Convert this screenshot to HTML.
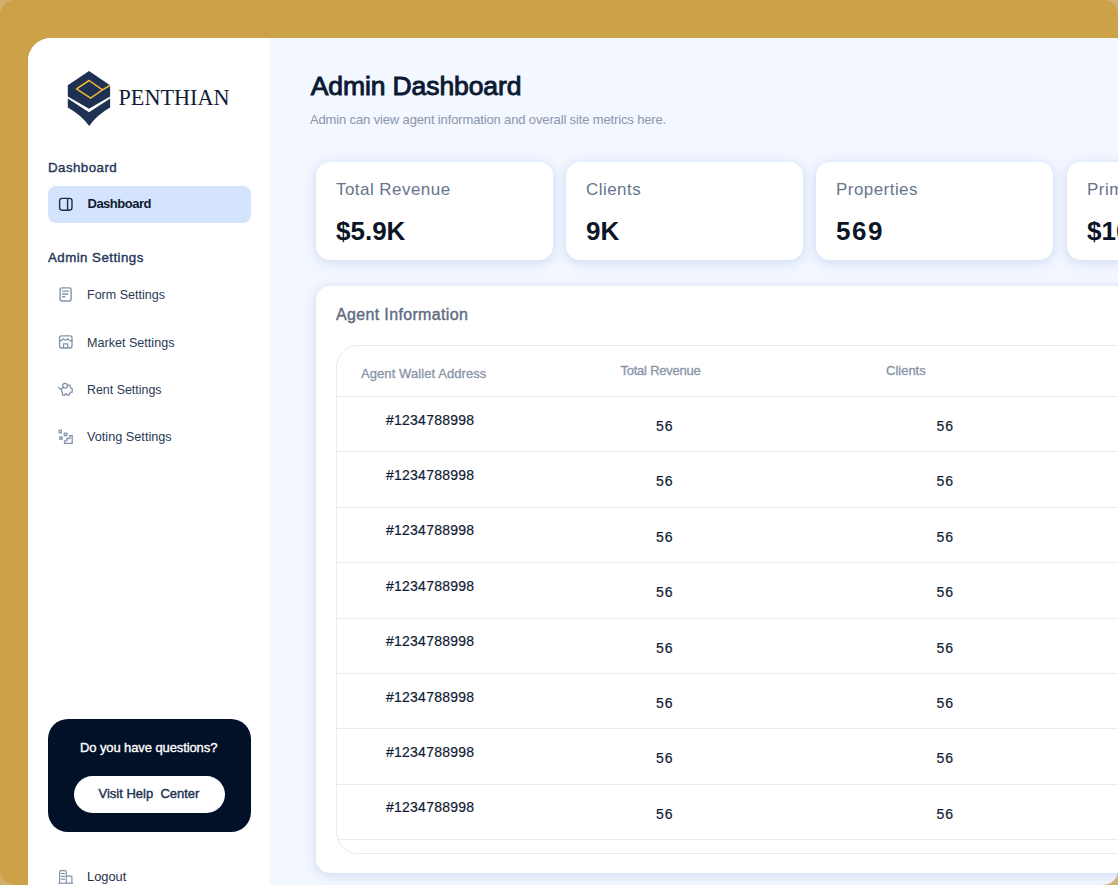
<!DOCTYPE html>
<html><head><meta charset="utf-8">
<style>
*{box-sizing:border-box;margin:0;padding:0}
html,body{width:1118px;height:885px;overflow:hidden;background:#D3AF6D}
body{font-family:"Liberation Sans",sans-serif;position:relative}
.frame{position:absolute;left:0;top:0;width:1118px;height:885px;border-radius:15px;background:#CDA147;overflow:hidden}
.app{position:absolute;left:28px;top:38px;width:1200px;height:900px;border-top-left-radius:23px;background:#F3F7FF;overflow:hidden}
.side{position:absolute;left:28px;top:38px;width:242px;height:900px;border-top-left-radius:23px;background:#fff}
.t{position:absolute;white-space:nowrap;line-height:1}
.card{position:absolute;top:162px;width:237px;height:98px;background:#fff;border-radius:14px;box-shadow:0 2px 10px 2px rgba(190,208,238,.55)}
.lbl{position:absolute;left:20px;top:18.5px;font-size:17px;letter-spacing:0.45px;color:#66758C;line-height:1;white-space:nowrap}
.val{position:absolute;left:20px;top:56px;font-size:26px;font-weight:bold;color:#0B1526;line-height:1;white-space:nowrap}
.agent{position:absolute;left:316px;top:286px;width:900px;height:587px;background:#fff;border-radius:14px;box-shadow:0 2px 10px 2px rgba(190,208,238,.55)}
.tbl{position:absolute;left:336px;top:345px;width:900px;height:509px;border:1px solid #E6EAF1;border-radius:22px;background:#fff}
.sep{position:absolute;left:337px;width:800px;height:1px;background:#E8ECF2}
.addr{position:absolute;left:386px;font-size:14px;letter-spacing:0.24px;-webkit-text-stroke:0.2px #0F1B33;color:#0F1B33;line-height:1;white-space:nowrap}
.n1{position:absolute;left:656px;font-size:14px;letter-spacing:1px;-webkit-text-stroke:0.2px #0F1B33;color:#0F1B33;line-height:1}
.n2{position:absolute;left:936.5px;font-size:14px;letter-spacing:1px;-webkit-text-stroke:0.2px #0F1B33;color:#0F1B33;line-height:1}
.corner{position:absolute;width:24px;height:24px}
</style></head>
<body>
<div class="frame">
  <div class="app"></div>
  <div class="side"></div>
</div>

<!-- logo -->
<svg style="position:absolute;left:60px;top:66px" width="60" height="64" viewBox="60 66 60 64">
  <path d="M89 71 L110.1 85.2 L110.1 96.4 L89 108.7 L67.8 96.4 L67.8 85.2 Z" fill="#1E3152"/>
  <path d="M67.8 98.5 L89 112.3 L110.1 98.5 L110.1 107.6 Q97 115 89.2 126 Q81 115 67.8 107.6 Z" fill="#1E3152"/>
  <path d="M89.1 80.5 L102.5 89.9 L90.6 98.2 L76.5 88.8 Z M102.5 89.9 L109.8 85.5" fill="none" stroke="#F2B739" stroke-width="1.5" stroke-linejoin="round"/>
</svg>
<div class="t" style="left:118.5px;top:86.5px;font-family:'Liberation Serif',serif;font-size:22.2px;color:#0F1D38">PENTHIAN</div>

<!-- sidebar -->
<div class="t" style="left:48px;top:161px;font-size:13.3px;letter-spacing:0.45px;-webkit-text-stroke:0.4px #25385A;color:#25385A">Dashboard</div>
<div style="position:absolute;left:48px;top:186px;width:203px;height:37px;border-radius:8px;background:#D5E4FD"></div>
<div class="t" style="left:87.5px;top:197px;font-size:13px;font-weight:bold;letter-spacing:-0.5px;color:#0E1A30">Dashboard</div>
<div class="t" style="left:48px;top:251px;font-size:13.3px;letter-spacing:0.45px;-webkit-text-stroke:0.4px #25385A;color:#25385A">Admin Settings</div>
<div class="t" style="left:86.5px;top:288.2px;font-size:13.6px;transform:scaleX(0.921);transform-origin:0 0;color:#2B3A55">Form Settings</div>
<div class="t" style="left:86.5px;top:335.6px;font-size:13.6px;transform:scaleX(0.926);transform-origin:0 0;color:#2B3A55">Market Settings</div>
<div class="t" style="left:86.5px;top:383px;font-size:13.6px;transform:scaleX(0.913);transform-origin:0 0;color:#2B3A55">Rent Settings</div>
<div class="t" style="left:86.8px;top:430px;font-size:13.6px;transform:scaleX(0.934);transform-origin:0 0;color:#2B3A55">Voting Settings</div>

<div style="position:absolute;left:48px;top:719px;width:203px;height:113px;border-radius:20px;background:#031128"></div>
<div class="t" style="left:80px;top:740.5px;font-size:13px;letter-spacing:-0.1px;-webkit-text-stroke:0.35px #fff;color:#fff">Do you have questions?</div>
<div style="position:absolute;left:74px;top:775.5px;width:150.5px;height:37px;border-radius:19px;background:#fff"></div>
<div class="t" style="left:98.5px;top:787px;font-size:13px;-webkit-text-stroke:0.4px #213352;color:#213352">Visit Help&nbsp; Center</div>
<div class="t" style="left:86.5px;top:870.3px;font-size:13.6px;transform:scaleX(0.946);transform-origin:0 0;color:#1F2E4A">Logout</div>


<!-- icons -->
<svg style="position:absolute;left:54px;top:192px" width="24" height="24" viewBox="54 192 24 24" fill="none" stroke="#1D2F4E" stroke-width="1.4">
  <rect x="59.6" y="198.4" width="12.4" height="11.8" rx="2.6"/><path d="M67.6 198.4 V210.2"/>
</svg>
<svg style="position:absolute;left:54px;top:283px" width="24" height="24" viewBox="54 283 24 24" fill="none" stroke="#8392AA" stroke-width="1.4" stroke-linecap="round">
  <rect x="60.1" y="287.9" width="11" height="13.1" rx="2"/><path d="M62.6 291.1 H68.6 M62.6 294 H67.6 M62.6 296.7 H64.6"/>
</svg>
<svg style="position:absolute;left:54px;top:330px" width="24" height="24" viewBox="54 330 24 24" fill="none" stroke="#8392AA" stroke-width="1.3" stroke-linejoin="round">
  <rect x="59.6" y="335.8" width="12.4" height="12.2" rx="2"/>
  <path d="M59.6 340.6 Q61.6 341.4 63.4 338.6 Q65.5 341.6 67.6 338.6 Q69.5 341.4 72 340.6"/>
  <path d="M63.5 348 V343.8 H67.7 V348"/>
</svg>
<svg style="position:absolute;left:54px;top:377px" width="24" height="24" viewBox="54 377 24 24" fill="none" stroke="#8392AA" stroke-width="1.3" stroke-linejoin="round" stroke-linecap="round">
  <circle cx="65.1" cy="385.8" r="2.4"/>
  <path d="M62.9 387.3 C61.6 388.2 61.3 389.6 61.6 391 L62.5 392.8 L62.5 395.2 L64.7 395.2 L65.2 393.8 L66.6 393.8 L67 395.2 L69.2 395.2 L69.4 393.3 L71.1 392.2 L72.2 392.2 L72.2 388.6 L71 388.4 L70.2 386.8 L70.2 385.2 L67.4 385.2"/>
  <path d="M58.8 387.4 L60.4 389.2"/>
</svg>
<svg style="position:absolute;left:54px;top:425px" width="24" height="24" viewBox="54 425 24 24" fill="none" stroke="#8392AA" stroke-width="1.3" stroke-linejoin="round">
  <rect x="59.1" y="430.1" width="2.3" height="2.7" rx="0.6"/>
  <rect x="64.2" y="433.1" width="2.8" height="2.4" rx="0.6"/>
  <rect x="59.8" y="437" width="2.3" height="2.3" rx="0.6"/>
  <path d="M64.5 443.4 V440.9 H66.8 V438.5 H69.8 V435.6 H72.2 V443.4 Z"/>
</svg>
<svg style="position:absolute;left:54px;top:863px" width="24" height="22" viewBox="54 863 24 22" fill="none" stroke="#8392AA" stroke-width="1.2" stroke-linejoin="round">
  <path d="M59.6 883 V872 Q59.6 870.7 60.9 870.7 H65 Q66.3 870.7 66.3 872 V883"/>
  <path d="M66.3 876.2 H70.8 Q71.9 876.2 71.9 877.3 V883"/>
  <path d="M58.2 883.2 H73.2"/>
  <path d="M61.3 873.5 H64.6 M61.3 876.4 H64.6 M61.3 879.2 H64.6" stroke-linecap="round"/>
</svg>

<!-- main -->
<div class="t" style="left:310.7px;top:72.8px;font-size:26.5px;letter-spacing:-0.1px;-webkit-text-stroke:0.95px #0B1A33;color:#0B1A33">Admin Dashboard</div>
<div class="t" style="left:310px;top:113px;font-size:13px;letter-spacing:-0.14px;color:#8A96AA">Admin can view agent information and overall site metrics here.</div>

<div class="card" style="left:316px"><div class="lbl">Total Revenue</div><div class="val">$5.9K</div></div>
<div class="card" style="left:566px"><div class="lbl">Clients</div><div class="val">9K</div></div>
<div class="card" style="left:816px"><div class="lbl">Properties</div><div class="val" style="letter-spacing:1.5px">569</div></div>
<div class="card" style="left:1067px"><div class="lbl">Primary</div><div class="val">$10K</div></div>

<div class="agent"></div>
<div class="t" style="left:336px;top:306.5px;font-size:16px;letter-spacing:0.35px;-webkit-text-stroke:0.4px #5E6C82;color:#5E6C82">Agent Information</div>
<div class="tbl"></div>
<div class="t" style="left:361px;top:367px;font-size:13px;letter-spacing:0.08px;-webkit-text-stroke:0.3px #8794A8;color:#8794A8">Agent Wallet Address</div>
<div class="t" style="left:620.5px;top:363.5px;font-size:13px;letter-spacing:-0.24px;-webkit-text-stroke:0.3px #8794A8;color:#8794A8">Total Revenue</div>
<div class="t" style="left:886px;top:364px;font-size:13px;-webkit-text-stroke:0.3px #8794A8;color:#8794A8">Clients</div>

<div class="sep" style="top:396px"></div>
<div class="addr" style="top:412.5px">#1234788998</div>
<div class="n1" style="top:419.0px">56</div><div class="n2" style="top:419.0px">56</div>
<div class="sep" style="top:451px"></div>
<div class="addr" style="top:467.9px">#1234788998</div>
<div class="n1" style="top:474.4px">56</div><div class="n2" style="top:474.4px">56</div>
<div class="sep" style="top:507px"></div>
<div class="addr" style="top:523.3px">#1234788998</div>
<div class="n1" style="top:529.8px">56</div><div class="n2" style="top:529.8px">56</div>
<div class="sep" style="top:562px"></div>
<div class="addr" style="top:578.7px">#1234788998</div>
<div class="n1" style="top:585.2px">56</div><div class="n2" style="top:585.2px">56</div>
<div class="sep" style="top:618px"></div>
<div class="addr" style="top:634.1px">#1234788998</div>
<div class="n1" style="top:640.6px">56</div><div class="n2" style="top:640.6px">56</div>
<div class="sep" style="top:673px"></div>
<div class="addr" style="top:689.5px">#1234788998</div>
<div class="n1" style="top:696.0px">56</div><div class="n2" style="top:696.0px">56</div>
<div class="sep" style="top:728px"></div>
<div class="addr" style="top:744.9px">#1234788998</div>
<div class="n1" style="top:751.4px">56</div><div class="n2" style="top:751.4px">56</div>
<div class="sep" style="top:784px"></div>
<div class="addr" style="top:800.3px">#1234788998</div>
<div class="n1" style="top:806.8px">56</div><div class="n2" style="top:806.8px">56</div>
<div class="sep" style="top:839px"></div>
</body></html>
